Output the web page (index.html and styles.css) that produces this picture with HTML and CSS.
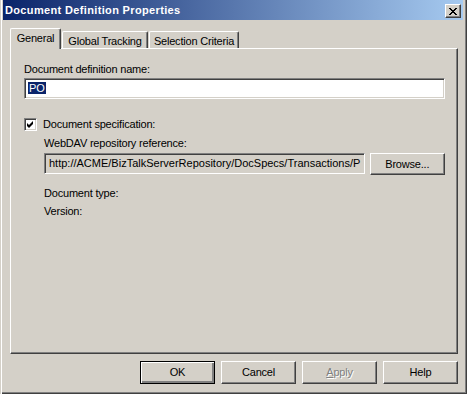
FILE: index.html
```html
<!DOCTYPE html>
<html lang="en">
<head>
    <meta charset="UTF-8">
    <title>Document Definition Properties</title>
    <link rel="stylesheet" href="styles.css">
</head>
<body>
    <div class="window">
        <div class="titlebar">
            <span class="title">Document Definition Properties</span>
            <span class="close-btn">
                <svg width="8" height="7" viewBox="0 0 8 7">
                    <path d="M0 0h2v1h1v1h2v-1h1v-1h2v1h-1v1h-1v1h-1v1h1v1h1v1h1v1h-2v-1h-1v-1h-2v1h-1v1h-2v-1h1v-1h1v-1h1v-1h-1v-1h-1v-1h-1z" fill="#000"/>
                </svg>
            </span>
        </div>

        <div class="content">
            <div class="tabs">
                <div class="tab active">General</div>
                <div class="tab tracking">Global Tracking</div>
                <div class="tab criteria">Selection Criteria</div>
            </div>

            <div class="panel">
                <div class="label">Document definition name:</div>
                <div class="textbox name-box"><span class="selected">PO</span></div>

                <div class="check-row">
                    <span class="checkbox">
                        <svg width="7" height="7" viewBox="0 0 7 7">
                            <path d="M6 0v3l-4 4l-2-2v-3l2 2z" fill="#000"/>
                        </svg>
                    </span>
                    <span>Document specification:</span>
                </div>

                <div class="spec-group">
                    <div class="label">WebDAV repository reference:</div>
                    <div class="browse-row">
                        <div class="textbox readonly">http://ACME/BizTalkServerRepository/DocSpecs/Transactions/P</div>
                        <span class="button browse">Browse...</span>
                    </div>
                    <div class="info doc-type">Document type:</div>
                    <div class="info">Version:</div>
                </div>
            </div>

            <div class="buttons">
                <span class="button default">OK</span>
                <span class="button">Cancel</span>
                <span class="button disabled"><u>A</u>pply</span>
                <span class="button">Help</span>
            </div>
        </div>
    </div>
</body>
</html>
```

FILE: styles.css
```css
body {
    margin: 0;
    padding: 0;
    background-color: #d4d0c8;
    font-family: "Liberation Sans", Arial, sans-serif;
    font-size: 11px;
    line-height: 13px;
    letter-spacing: -0.2px;
    color: #000;
}

.window {
    width: 467px;
    height: 394px;
    box-sizing: border-box;
    background-color: #d4d0c8;
    box-shadow: inset 1px 0 #d4d0c8, inset 2px 0 #fff, inset -1px -1px #404040, inset -2px -2px #808080;
}

.titlebar {
    height: 20px;
    margin: 0 4px 0 3px;
    display: flex;
    align-items: flex-end;
    justify-content: space-between;
    padding: 0 2px 2px 2px;
    box-sizing: border-box;
    background: linear-gradient(to right, #0a246a, #a6caf0);
}

.title {
    color: #fff;
    font-weight: bold;
    letter-spacing: 0.35px;
    align-self: center;
    margin-top: 2px;
}

.close-btn {
    width: 16px;
    height: 14px;
    box-sizing: border-box;
    display: flex;
    align-items: center;
    justify-content: center;
    background-color: #d4d0c8;
    border: 1px solid;
    border-color: #fff #404040 #404040 #fff;
    box-shadow: inset -1px -1px #808080;
}

.content {
    padding: 8px 9px 0 10px;
}

.tabs {
    display: flex;
    align-items: flex-end;
    height: 20px;
    position: relative;
    z-index: 1;
}

.tab {
    height: 17px;
    box-sizing: border-box;
    padding-top: 3px;
    text-align: center;
    border: 1px solid #fff;
    border-bottom: none;
    border-right-color: #404040;
    box-shadow: inset -1px 0 #808080;
    border-radius: 2px 2px 0 0;
    background-color: #d4d0c8;
    margin-left: 1px;
}

.tab.active {
    width: 51px;
    height: 21px;
    margin-left: 0;
    margin-bottom: -1px;
}

.tab.tracking {
    width: 86px;
}

.tab.criteria {
    width: 90px;
}

.panel {
    height: 306px;
    box-sizing: border-box;
    padding: 14px 12px 0 13px;
    border: 1px solid #fff;
    border-right-color: #404040;
    border-bottom-color: #404040;
    box-shadow: inset -1px -1px #808080;
}

.textbox {
    height: 21px;
    box-sizing: border-box;
    border: 1px solid;
    border-color: #808080 #fff #fff #808080;
    box-shadow: inset 1px 1px #404040, inset -1px -1px #d4d0c8;
    background-color: #fff;
    padding: 3px 3px 0 3px;
    white-space: nowrap;
    overflow: hidden;
}

.name-box {
    margin-top: 2px;
}

.selected {
    background-color: #0a246a;
    color: #fff;
    padding: 0 1px;
}

.check-row {
    display: flex;
    align-items: center;
    margin-top: 19px;
    gap: 6px;
}

.checkbox {
    width: 13px;
    height: 13px;
    box-sizing: border-box;
    display: flex;
    align-items: center;
    justify-content: center;
    background-color: #fff;
    border: 1px solid;
    border-color: #808080 #fff #fff #808080;
    box-shadow: inset 1px 1px #404040, inset -1px -1px #d4d0c8;
}

.spec-group {
    padding-left: 20px;
    margin-top: 6px;
}

.browse-row {
    display: flex;
    align-items: flex-start;
    gap: 5px;
    margin-top: 3px;
}

.textbox.readonly {
    width: 323px;
    background-color: #d4d0c8;
    padding-left: 4px;
    letter-spacing: 0;
}

.button {
    width: 75px;
    height: 23px;
    box-sizing: border-box;
    display: flex;
    align-items: center;
    justify-content: center;
    border: 1px solid;
    border-color: #fff #404040 #404040 #fff;
    box-shadow: inset -1px -1px #808080;
    background-color: #d4d0c8;
}

.button.browse {
    width: 76px;
    height: 22px;
}

.button.default {
    border: 1px solid #000;
    box-shadow: inset 1px 1px #fff, inset -2px -2px #808080, inset -1px -1px #404040;
}

.button.disabled {
    color: #808080;
    text-shadow: 1px 1px #fff;
}

.info {
    margin-top: 5px;
}

.info.doc-type {
    margin-top: 12px;
}

.buttons {
    display: flex;
    justify-content: flex-end;
    gap: 6px;
    margin-top: 7px;
}
```
